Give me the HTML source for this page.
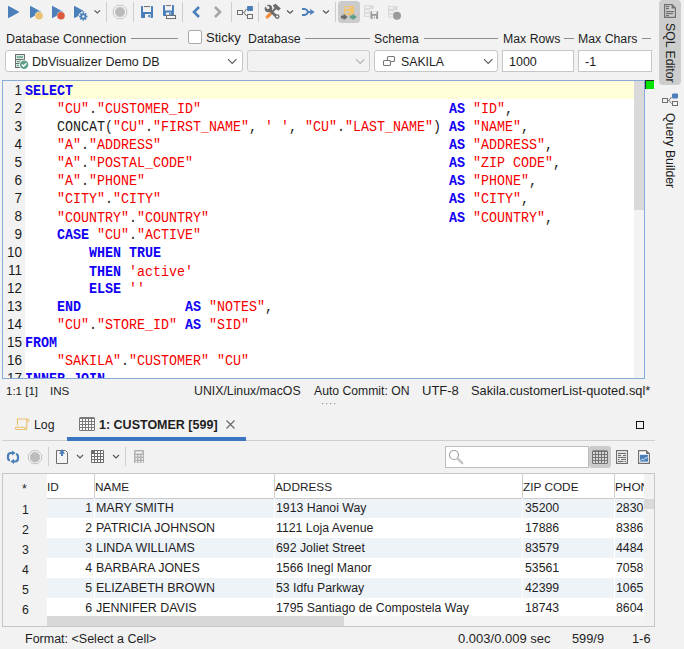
<!DOCTYPE html>
<html><head><meta charset="utf-8">
<style>
*{margin:0;padding:0;box-sizing:border-box}
html,body{width:684px;height:649px;overflow:hidden;background:#f2f2f2}
body{position:relative;font-family:"Liberation Sans",sans-serif;font-size:12.3px;color:#1e1e1e}
.a{position:absolute}
.t{position:absolute;white-space:pre;line-height:16px}
.combo{position:absolute;background:#fff;border:1px solid #c6c6c6;border-radius:3px}
.field{position:absolute;background:#fff;border:1px solid #c6c6c6}
.hl{position:absolute;height:1px;background:#8e8e8e}
.sep{position:absolute;width:1px;background:#cdcdcd}
#code{position:absolute;left:25px;top:82px;font-family:"Liberation Mono",monospace;font-size:13.333px;line-height:16.3636px;transform-origin:0 0;transform:scaleY(1.1);white-space:pre;color:#1a1a1a}
#code .k{color:#0f00f5;font-weight:bold}
#code .s{color:#f50000}
#gut{position:absolute;left:3px;top:81px;width:22px;height:297px;background:#f2f2f2}
.ln{position:absolute;left:0;width:19px;text-align:right;font-size:13.5px;line-height:18px;color:#1a1a1a;transform-origin:0 13px;transform:scaleY(1.1)}
.cell{position:absolute;white-space:pre;line-height:17px;font-size:12.3px;color:#1e1e1e}
</style></head><body>

<!-- ===== TOOLBAR ===== -->
<svg class="a" style="left:0;top:0" width="410" height="26" viewBox="0 0 410 26">
  <!-- run -->
  <path d="M8.5 6.4 L18.6 12 L8.5 17.6 Z" fill="#4a7fba" stroke="#4a7fba" stroke-width="1" stroke-linejoin="round"/>
  <!-- run current -->
  <path d="M30.5 6.4 L40.6 12 L30.5 17.6 Z" fill="#4a7fba" stroke="#4a7fba" stroke-width="1" stroke-linejoin="round"/>
  <circle cx="39" cy="15.8" r="4.3" fill="#f2f2f2"/>
  <circle cx="39" cy="15.8" r="3.8" fill="#e8c173"/>
  <!-- run red -->
  <path d="M52.5 6.4 L62.6 12 L52.5 17.6 Z" fill="#4a7fba" stroke="#4a7fba" stroke-width="1" stroke-linejoin="round"/>
  <circle cx="61" cy="15.8" r="4.3" fill="#f2f2f2"/>
  <circle cx="61" cy="15.8" r="3.8" fill="#dd5a3c"/>
  <!-- run gear -->
  <path d="M74.5 6.4 L84.6 12 L74.5 17.6 Z" fill="#4a7fba" stroke="#4a7fba" stroke-width="1" stroke-linejoin="round"/>
  <circle cx="83.3" cy="16.4" r="4.9" fill="#f2f2f2"/>
  <g fill="#4a7fba"><circle cx="83.3" cy="16.4" r="2.9"/>
   <rect x="82.5" y="12.2" width="1.6" height="8.4"/><rect x="79.1" y="15.6" width="8.4" height="1.6"/>
   <rect x="82.5" y="12.2" width="1.6" height="8.4" transform="rotate(45 83.3 16.4)"/><rect x="82.5" y="12.2" width="1.6" height="8.4" transform="rotate(-45 83.3 16.4)"/></g>
  <circle cx="83.3" cy="16.4" r="1.2" fill="#f2f2f2"/>
  <path d="M94.5 10.3 L97.3 13 L100.1 10.3" stroke="#555" stroke-width="1.1" fill="none"/>
  <rect x="106" y="2" width="1" height="20" fill="#cdcdcd"/>
  <!-- stop -->
  <path d="M117.24 5.35 H122.76 L126.65 9.24 V14.76 L122.76 18.65 H117.24 L113.35 14.76 V9.24 Z" fill="none" stroke="#c4c4c4" stroke-width="1"/>
  <path d="M118 7.2 H122 L124.8 10 V14 L122 16.8 H118 L115.2 14 V10 Z" fill="#bababa"/>
  <rect x="133" y="2" width="1" height="20" fill="#cdcdcd"/>
  <!-- save -->
  <rect x="141" y="6" width="12" height="12" rx="0.8" fill="#4a7fba"/>
  <rect x="143" y="6" width="8" height="6" fill="#f2f2f2"/><rect x="144" y="6" width="6" height="1.1" fill="#777"/>
  <rect x="145" y="14" width="5.6" height="4" fill="#f2f2f2"/><rect x="148.2" y="15" width="1.7" height="2.2" fill="#4a7fba"/>
  <!-- save as -->
  <rect x="163" y="5" width="11" height="11" rx="0.8" fill="#4a7fba"/>
  <rect x="165" y="5" width="7" height="5.5" fill="#f2f2f2"/><rect x="166" y="5" width="5" height="1.1" fill="#777"/>
  <rect x="166" y="12.5" width="5" height="3.5" fill="#f2f2f2"/><rect x="169" y="13" width="1.6" height="1.8" fill="#4a7fba"/>
  <rect x="166.5" y="15.5" width="9" height="3" fill="#fff" stroke="#6e6e6e" stroke-width="1.1"/>
  <rect x="182" y="2" width="1" height="20" fill="#cdcdcd"/>
  <!-- back/fwd -->
  <path d="M199 7 L194 12 L199 17" stroke="#4a7fba" stroke-width="2.6" fill="none" stroke-linejoin="miter"/>
  <path d="M215 7 L220 12 L215 17" stroke="#a6a6a6" stroke-width="2.6" fill="none"/>
  <rect x="231" y="2" width="1" height="20" fill="#cdcdcd"/>
  <!-- diagram -->
  <rect x="237.5" y="10.5" width="5" height="4" fill="none" stroke="#707070"/>
  <rect x="247" y="6" width="6" height="5" rx="1" fill="#4a7fba"/>
  <rect x="247.5" y="14.5" width="5" height="4" fill="none" stroke="#707070"/>
  <path d="M242.5 12.5 L244 12.5 L246.5 9 M244 12.5 L246.5 16" stroke="#707070" fill="none"/>
  <rect x="258" y="2" width="1" height="20" fill="#cdcdcd"/>
  <!-- tools -->
  <path d="M275.5 8.5 L268 16" stroke="#6b6b6b" stroke-width="2" fill="none"/>
  <path d="M270.5 13.9 L267.2 17" stroke="#f0903c" stroke-width="3.2" stroke-linecap="round" fill="none"/>
  <path d="M272.8 5.2 L275.6 3.8 L280.8 8.6 L278.4 10.8 L276.5 9.3 L275 9 Z" fill="#6b6b6b"/>
  <path d="M270 10.5 L277 17" stroke="#6b6b6b" stroke-width="2.8" fill="none"/>
  <circle cx="277.2" cy="16.6" r="2.4" fill="#6b6b6b"/><circle cx="277.2" cy="16.6" r="1.1" fill="#f2f2f2"/>
  <circle cx="268.5" cy="8.5" r="3.8" fill="#6b6b6b"/>
  <path d="M268.4 8 L264.2 6.2 L266.4 3.8 Z" fill="#f2f2f2"/><circle cx="267.9" cy="7.6" r="1.5" fill="#f2f2f2"/>
  <path d="M287 10.5 L290 13.3 L293 10.5" stroke="#555" stroke-width="1.2" fill="none"/>
  <!-- blue arrows -->
  <path d="M302 9 H304.8 Q306.5 9 308.3 12 Q306.5 15 304.8 15 H302 M308 12 H311.5" stroke="#4a7fba" stroke-width="2.1" fill="none"/>
  <path d="M309.6 8.6 L314.6 12 L309.6 15.4 L311 12 Z" fill="#4a7fba"/>
  <path d="M323 10.5 L326 13.3 L329 10.5" stroke="#555" stroke-width="1.2" fill="none"/>
  <rect x="335" y="2" width="1" height="20" fill="#cdcdcd"/>
  <!-- selected -->
  <rect x="338" y="1" width="22" height="22" rx="3.5" fill="#cbcbcb"/>
  <path d="M345 6 H353 Q354 6 354 7 V13.5 Q354 14.5 353 14.5 H351 V15.5 H348 V14.5 H345 Q344 14.5 344 13.5 V7 Q344 6 345 6 Z" fill="#f0c46e"/>
  <rect x="345" y="7" width="4.5" height="2" fill="#cfcfcf"/><rect x="345" y="11" width="4.5" height="2" fill="#cfcfcf"/>
  <path d="M341 15.6 H343.6 V13.8 L347.8 17 L343.6 20.2 V18.4 H341 Z" fill="#6a6a6a"/>
  <path d="M349.8 15.6 H352.6 V13.8 L356.9 17 L352.6 20.2 V18.4 H349.8 Z" fill="#5b9e86"/>
  <!-- disabled 1 -->
  <rect x="364" y="5.3" width="9.5" height="4" rx="0.8" fill="#d9d9d9"/><rect x="365.2" y="6.5" width="4.3" height="1.6" fill="#f4f4f4"/>
  <rect x="364" y="9.3" width="6" height="3.8" fill="#d9d9d9"/><rect x="365.2" y="10.399999999999999" width="4.3" height="1.6" fill="#f4f4f4"/>
  <rect x="364" y="13.1" width="6" height="3.8" fill="#d9d9d9"/><rect x="365.2" y="14.2" width="4.3" height="1.6" fill="#f4f4f4"/>
  <rect x="370" y="11" width="8.2" height="8" rx="0.5" fill="#f2f2f2"/>
  <rect x="370.5" y="11.3" width="7.6" height="7.6" fill="#9a9a9a"/><rect x="372" y="11.3" width="4.6" height="2.6" fill="#f2f2f2"/><rect x="372.6" y="15.8" width="3.4" height="3.1" fill="#f2f2f2"/><rect x="374" y="16.5" width="1" height="1.8" fill="#9a9a9a"/>
  <!-- disabled 2 -->
  <rect x="388" y="6" width="9.5" height="4" rx="0.8" fill="#d9d9d9"/><rect x="389.2" y="7.2" width="4.3" height="1.6" fill="#f4f4f4"/>
  <rect x="388" y="10" width="6" height="3.8" fill="#d9d9d9"/><rect x="389.2" y="11.1" width="4.3" height="1.6" fill="#f4f4f4"/>
  <rect x="388" y="13.8" width="6" height="3.8" fill="#d9d9d9"/><rect x="389.2" y="14.9" width="4.3" height="1.6" fill="#f4f4f4"/>
  <circle cx="397" cy="15.8" r="4.6" fill="#f2f2f2"/><circle cx="397" cy="15.8" r="4" fill="#9a9a9a"/>
</svg>

<!-- ===== LABEL ROW ===== -->
<div class="t" style="left:6px;top:31px;font-size:12.5px">Database Connection</div>
<div class="hl" style="left:131px;top:38px;width:47px"></div>
<div class="a" style="left:188px;top:30px;width:14px;height:14px;border:1px solid #aaa;border-radius:2px;background:#fff"></div>
<div class="t" style="left:206px;top:30px;font-size:13px">Sticky</div>
<div class="t" style="left:248px;top:31px;font-size:12.3px">Database</div>
<div class="hl" style="left:305px;top:38px;width:65px"></div>
<div class="t" style="left:374px;top:31px;font-size:12.2px">Schema</div>
<div class="hl" style="left:424px;top:38px;width:74px"></div>
<div class="t" style="left:503px;top:31px;font-size:12.3px">Max Rows</div>
<div class="hl" style="left:564px;top:38px;width:10px"></div>
<div class="t" style="left:578px;top:31px;font-size:12.3px">Max Chars</div>
<div class="hl" style="left:642px;top:38px;width:9px"></div>

<!-- ===== COMBOS ===== -->
<div class="combo" style="left:5px;top:50px;width:238px;height:22px"></div>
<svg class="a" style="left:14px;top:53px" width="16" height="17" viewBox="14 53 16 17">
  <rect x="15" y="54" width="10" height="6" fill="#6e6e6e"/><rect x="16" y="55" width="8" height="4" fill="#dcece4"/><rect x="16.8" y="56.3" width="6.2" height="1.5" fill="#5e9f85"/>
  <rect x="15" y="59" width="6" height="9" fill="#6e6e6e"/><rect x="16" y="60" width="4.5" height="3" fill="#dcece4"/><rect x="16" y="64" width="4.5" height="3" fill="#dcece4"/>
  <rect x="16.8" y="60.9" width="3" height="1.3" fill="#5e9f85"/><rect x="16.8" y="64.9" width="2" height="1.3" fill="#5e9f85"/>
  <circle cx="24.1" cy="64.7" r="4.9" fill="#fff"/><circle cx="24.1" cy="64.7" r="4.2" fill="#5e9f85"/>
  <path d="M21.8 64.6 L23.6 66.3 L26.5 63.2" stroke="#fff" stroke-width="1.4" fill="none"/>
</svg>
<div class="t" style="left:32px;top:54px;font-size:12.5px">DbVisualizer Demo DB</div>
<svg class="a" style="left:227px;top:58px" width="11" height="7"><path d="M1 1.2 L5.2 5.4 L9.4 1.2" stroke="#555" stroke-width="1.1" fill="none"/></svg>

<div class="combo" style="left:247px;top:50px;width:123px;height:22px;background:#f2f2f2;border-color:#cdcdcd"></div>
<svg class="a" style="left:355px;top:58px" width="11" height="7"><path d="M1 1.2 L5.2 5.4 L9.4 1.2" stroke="#b0b0b0" stroke-width="1.1" fill="none"/></svg>

<div class="combo" style="left:374px;top:50px;width:124px;height:22px"></div>
<svg class="a" style="left:382px;top:55px" width="14" height="12" viewBox="382 55 14 12"><rect x="387.5" y="56.5" width="7" height="5" rx="1" fill="none" stroke="#777" stroke-width="1.1"/><rect x="383.5" y="60.5" width="7" height="5" rx="1" fill="#fff" stroke="#777" stroke-width="1.1"/></svg>
<div class="t" style="left:401px;top:54px;font-size:12.3px">SAKILA</div>
<svg class="a" style="left:483px;top:58px" width="11" height="7"><path d="M1 1.2 L5.2 5.4 L9.4 1.2" stroke="#555" stroke-width="1.1" fill="none"/></svg>

<div class="field" style="left:502px;top:50px;width:72px;height:22px"></div>
<div class="t" style="left:509px;top:54px;font-size:12.5px">1000</div>
<div class="field" style="left:578px;top:50px;width:74px;height:22px"></div>
<div class="t" style="left:585px;top:54px;font-size:12.5px">-1</div>

<!-- ===== RIGHT TABS ===== -->
<div class="a" style="left:659px;top:0px;width:22px;height:85px;background:#cdcdcd;border-radius:4px"></div>
<svg class="a" style="left:663px;top:3px" width="14" height="16" viewBox="663 3 14 16"><path d="M664.6 4.6 H672 L675.4 8 V17.4 H664.6 Z" fill="none" stroke="#707070" stroke-width="1.2"/><path d="M671.6 4.6 V8.4 H675.4 Z" fill="#707070"/><g fill="#707070"><rect x="666" y="6" width="3" height="1.2"/><rect x="666" y="8" width="3" height="1.2"/><rect x="666" y="11" width="8" height="1.2"/><rect x="666" y="13" width="7" height="1.2"/><rect x="666" y="15" width="3" height="1.2"/></g></svg>
<div class="t" style="left:662px;top:23px;transform-origin:0 0;transform:translate(16px,0) rotate(90deg);font-size:12.3px">SQL Editor</div>
<svg class="a" style="left:661px;top:93px" width="18" height="15">
  <rect x="1.5" y="5.5" width="5" height="4" fill="none" stroke="#707070"/>
  <rect x="11" y="0.5" width="6" height="5" rx="1" fill="#4a7fba"/>
  <rect x="11.5" y="8.5" width="5" height="4" fill="none" stroke="#707070"/>
  <path d="M6.5 7.5 L8 7.5 L10.5 4 M8 7.5 L10.5 10.5" stroke="#707070" fill="none"/>
</svg>
<div class="t" style="left:662px;top:113px;transform-origin:0 0;transform:translate(16px,0) rotate(90deg);font-size:12.3px">Query Builder</div>

<!-- ===== EDITOR ===== -->
<div class="a" style="left:2px;top:80px;width:643px;height:299px;background:#fff;border:1px solid #86abd9"></div>
<div id="gut"></div>
<div class="a" style="left:25px;top:81px;width:609px;height:18px;background:#fffed8"></div>
<div class="a" style="left:3px;top:81px;width:631px;height:297px;overflow:hidden">
 <div style="position:absolute;left:0;top:0">
  <div class="ln" style="top:1px">1</div><div class="ln" style="top:19px">2</div><div class="ln" style="top:37px">3</div><div class="ln" style="top:55px">4</div>
  <div class="ln" style="top:73px">5</div><div class="ln" style="top:91px">6</div><div class="ln" style="top:109px">7</div><div class="ln" style="top:127px">8</div>
  <div class="ln" style="top:145px">9</div><div class="ln" style="top:163px">10</div><div class="ln" style="top:181px">11</div><div class="ln" style="top:199px">12</div>
  <div class="ln" style="top:217px">13</div><div class="ln" style="top:235px">14</div><div class="ln" style="top:253px">15</div><div class="ln" style="top:271px">16</div>
  <div class="ln" style="top:289px">17</div>
 </div>
 <div id="code" style="left:22px;top:2px"><span class="k">SELECT</span>
    <span class="s">"CU"</span>.<span class="s">"CUSTOMER_ID"</span>                               <span class="k">AS</span> <span class="s">"ID"</span>,
    CONCAT(<span class="s">"CU"</span>.<span class="s">"FIRST_NAME"</span>, <span class="s">' '</span>, <span class="s">"CU"</span>.<span class="s">"LAST_NAME"</span>) <span class="k">AS</span> <span class="s">"NAME"</span>,
    <span class="s">"A"</span>.<span class="s">"ADDRESS"</span>                                    <span class="k">AS</span> <span class="s">"ADDRESS"</span>,
    <span class="s">"A"</span>.<span class="s">"POSTAL_CODE"</span>                                <span class="k">AS</span> <span class="s">"ZIP CODE"</span>,
    <span class="s">"A"</span>.<span class="s">"PHONE"</span>                                      <span class="k">AS</span> <span class="s">"PHONE"</span>,
    <span class="s">"CITY"</span>.<span class="s">"CITY"</span>                                    <span class="k">AS</span> <span class="s">"CITY"</span>,
    <span class="s">"COUNTRY"</span>.<span class="s">"COUNTRY"</span>                              <span class="k">AS</span> <span class="s">"COUNTRY"</span>,
    <span class="k">CASE</span> <span class="s">"CU"</span>.<span class="s">"ACTIVE"</span>
        <span class="k">WHEN</span> <span class="k">TRUE</span>
        <span class="k">THEN</span> <span class="s">'active'</span>
        <span class="k">ELSE</span> <span class="s">''</span>
    <span class="k">END</span>             <span class="k">AS</span> <span class="s">"NOTES"</span>,
    <span class="s">"CU"</span>.<span class="s">"STORE_ID"</span> <span class="k">AS</span> <span class="s">"SID"</span>
<span class="k">FROM</span>
    <span class="s">"SAKILA"</span>.<span class="s">"CUSTOMER"</span> <span class="s">"CU"</span>
<span class="k">INNER JOIN</span></div>
</div>
<!-- scrollbar -->
<div class="a" style="left:634px;top:81px;width:10px;height:297px;background:#f3f3f3"></div>
<div class="a" style="left:634px;top:81px;width:10px;height:129px;background:#d9d9d9"></div>
<div class="a" style="left:645px;top:80px;width:9px;height:9px;background:#00e400;border-left:1px solid #2a2a2a;border-top:1px solid #2a2a2a"></div>

<!-- ===== STATUS ===== -->
<div class="t" style="left:6px;top:383px;font-size:11.5px">1:1 [1]</div>
<div class="t" style="left:50px;top:383px;font-size:11.6px">INS</div>
<div class="t" style="left:194px;top:383px;font-size:12.3px">UNIX/Linux/macOS</div>
<div class="t" style="left:314px;top:383px;font-size:12.2px">Auto Commit: ON</div>
<div class="t" style="left:422px;top:383px;font-size:13px">UTF-8</div>
<div class="t" style="left:471px;top:383px;font-size:12.8px">Sakila.customerList-quoted.sql*</div>
<svg class="a" style="left:322px;top:403px" width="15" height="2"><g fill="#9a9a9a"><rect x="0" y="0" width="1.2" height="1.2"/><rect x="4" y="0" width="1.2" height="1.2"/><rect x="8" y="0" width="1.2" height="1.2"/><rect x="12" y="0" width="1.2" height="1.2"/></g></svg>

<!-- ===== RESULT TABS ===== -->
<svg class="a" style="left:14px;top:416px" width="17" height="16" viewBox="14 416 17 16"><g fill="none" stroke="#e8c06a" stroke-width="1.1"><path d="M17.5 425.5 V419 H27.5 Q29 419 29 420.3 Q29 421.5 27.5 421.5 M26.8 419 V428.5 Q26.8 429.5 25.5 429.5 H16.5 Q15.5 429.5 15.5 428.3 Q15.5 427.2 16.5 427.2 H24.5 Q25.5 427.2 25.5 428.3 Q25.5 429.5 24.5 429.5"/></g></svg>
<div class="t" style="left:34px;top:417px;font-size:12.3px">Log</div>
<svg class="a" style="left:79px;top:417px" width="16" height="14" viewBox="79 417 16 14"><rect x="79" y="417" width="16" height="14" rx="1.5" fill="#7a7a7a"/><g fill="#fff"><rect x="80" y="419" width="2" height="2"/><rect x="83" y="419" width="2" height="2"/><rect x="86" y="419" width="2" height="2"/><rect x="89" y="419" width="2" height="2"/><rect x="92" y="419" width="2" height="2"/><rect x="80" y="422" width="2" height="2"/><rect x="83" y="422" width="2" height="2"/><rect x="86" y="422" width="2" height="2"/><rect x="89" y="422" width="2" height="2"/><rect x="92" y="422" width="2" height="2"/><rect x="80" y="425" width="2" height="2"/><rect x="83" y="425" width="2" height="2"/><rect x="86" y="425" width="2" height="2"/><rect x="89" y="425" width="2" height="2"/><rect x="92" y="425" width="2" height="2"/><rect x="80" y="428" width="2" height="2"/><rect x="83" y="428" width="2" height="2"/><rect x="86" y="428" width="2" height="2"/><rect x="89" y="428" width="2" height="2"/><rect x="92" y="428" width="2" height="2"/></g></svg>
<div class="t" style="left:99px;top:417px;font-size:12.5px;font-weight:bold">1: CUSTOMER [599]</div>
<svg class="a" style="left:225px;top:419px" width="11" height="11"><path d="M1.5 1.5 L9.5 9.5 M9.5 1.5 L1.5 9.5" stroke="#666" stroke-width="1.1"/></svg>
<div class="a" style="left:2px;top:440px;width:653px;height:1px;background:#cfcfcf"></div>
<div class="a" style="left:67px;top:437px;width:179px;height:4px;background:#3b76c3"></div>
<div class="a" style="left:636px;top:421px;width:8px;height:8px;border:1.6px solid #111"></div>

<!-- ===== RESULT TOOLBAR ===== -->
<svg class="a" style="left:0;top:444px" width="160" height="26" viewBox="0 444 160 26">
  <g fill="none" stroke="#4a7fba" stroke-width="2.2"><path d="M12.5 453 H11 Q8 453 8 456 V458 Q8 460 10 460.5"/><path d="M13.5 461.5 H15 Q18 461.5 18 458.5 V456.5 Q18 454.5 16 454"/></g>
  <path d="M12 450.6 L15.6 453 L12 455.6 Z M14 458.8 L10.5 461.4 L14 464 Z" fill="#4a7fba"/>
  <path d="M32.2 450.8 H37.8 L41.6 454.6 V459.9 L37.8 463.6 H32.2 L28.4 459.9 V454.6 Z" fill="none" stroke="#c2c2c2" stroke-width="1"/>
  <path d="M33 452.2 L37 452.2 L39.8 455 L39.8 459.5 L37 462.3 L33 462.3 L30.2 459.5 L30.2 455 Z" fill="#bcbcbc"/>
  <rect x="48" y="447" width="1" height="19" fill="#cdcdcd"/>
  <path d="M56.5 450.5 H65.5 L67.5 452.5 V463.5 H56.5 Z" fill="#f4f4f4" stroke="#6e6e6e"/>
  <path d="M62 449 L65 453.8 L63 453.8 L63 456 L61 456 L61 453.8 L59 453.8 Z" fill="#4a7fba"/>
  <path d="M77 455 L80 458 L83 455" stroke="#555" stroke-width="1.1" fill="none"/>
  <rect x="91" y="450" width="13" height="13" rx="1" fill="#6e6e6e"/>
  <g fill="#fff"><rect x="95" y="451" width="2" height="2"/><rect x="98" y="451" width="2" height="2"/><rect x="101" y="451" width="2" height="2"/><rect x="92" y="454" width="2" height="2"/><rect x="95" y="454" width="2" height="2"/><rect x="98" y="454" width="2" height="2"/><rect x="101" y="454" width="2" height="2"/><rect x="92" y="457" width="2" height="2"/><rect x="95" y="457" width="2" height="2"/><rect x="98" y="457" width="2" height="2"/><rect x="101" y="457" width="2" height="2"/><rect x="92" y="460" width="2" height="2"/><rect x="95" y="460" width="2" height="2"/><rect x="98" y="460" width="2" height="2"/><rect x="101" y="460" width="2" height="2"/></g>
  <path d="M113 455 L116 458 L119 455" stroke="#555" stroke-width="1.1" fill="none"/>
  <rect x="125" y="447" width="1" height="19" fill="#cdcdcd"/>
  <rect x="134" y="450" width="10" height="13" rx="1" fill="#b0b0b0"/>
  <rect x="135.5" y="451.5" width="7" height="2" fill="#f2f2f2"/>
  <g fill="#f2f2f2"><rect x="135.5" y="455" width="1.6" height="1.6"/><rect x="138.5" y="455" width="1.6" height="1.6"/><rect x="141.5" y="455" width="1.6" height="1.6"/><rect x="135.5" y="458" width="1.6" height="1.6"/><rect x="138.5" y="458" width="1.6" height="1.6"/><rect x="141.5" y="458" width="1.6" height="1.6"/><rect x="135.5" y="461" width="1.6" height="1.6"/><rect x="138.5" y="461" width="1.6" height="1.6"/><rect x="141.5" y="461" width="1.6" height="1.6"/></g>
</svg>
<div class="field" style="left:445px;top:446px;width:144px;height:22px;border-color:#bdbdbd"></div>
<svg class="a" style="left:447px;top:448px" width="20" height="18"><circle cx="7" cy="7" r="4.5" fill="none" stroke="#a0a0a0" stroke-width="1.2"/><path d="M10.8 10.8 L15.2 15.2" stroke="#c6c6c6" stroke-width="2.6" stroke-linecap="round"/></svg>
<div class="a" style="left:589px;top:446px;width:22px;height:22px;background:#cbcbcb;border-radius:3px"></div>
<svg class="a" style="left:591px;top:449px" width="18" height="16" viewBox="591 449 18 16"><rect x="592" y="450.2" width="16" height="13.8" rx="1.5" fill="#747474"/><g fill="#d6d6d6"><rect x="593" y="452" width="2" height="2"/><rect x="596" y="452" width="2" height="2"/><rect x="599" y="452" width="2" height="2"/><rect x="602" y="452" width="2" height="2"/><rect x="605" y="452" width="2" height="2"/><rect x="593" y="455" width="2" height="2"/><rect x="596" y="455" width="2" height="2"/><rect x="599" y="455" width="2" height="2"/><rect x="602" y="455" width="2" height="2"/><rect x="605" y="455" width="2" height="2"/><rect x="593" y="458" width="2" height="2"/><rect x="596" y="458" width="2" height="2"/><rect x="599" y="458" width="2" height="2"/><rect x="602" y="458" width="2" height="2"/><rect x="605" y="458" width="2" height="2"/><rect x="593" y="461" width="2" height="2"/><rect x="596" y="461" width="2" height="2"/><rect x="599" y="461" width="2" height="2"/><rect x="602" y="461" width="2" height="2"/><rect x="605" y="461" width="2" height="2"/></g></svg>
<svg class="a" style="left:615px;top:449px" width="15" height="17" viewBox="615 449 15 17"><rect x="616.6" y="450.6" width="10.8" height="12.8" fill="#fff" stroke="#707070" stroke-width="1.2"/><g fill="#707070"><rect x="618" y="452.8" width="8" height="1.2"/><rect x="618" y="454.8" width="3.4" height="1.2"/><rect x="623" y="454.8" width="3" height="1.2"/><rect x="618" y="456.8" width="8" height="1.2"/><rect x="618" y="458.8" width="1.6" height="1.2"/><rect x="621" y="458.8" width="5" height="1.2"/><rect x="618" y="460.8" width="5.5" height="1.2"/><rect x="624.5" y="460.8" width="1.5" height="1.2"/></g></svg>
<svg class="a" style="left:637px;top:449px" width="15" height="17" viewBox="637 449 15 17"><path d="M638.6 450.6 H646.2 L649.4 453.8 V463.4 H638.6 Z" fill="#fff" stroke="#707070" stroke-width="1.2"/><path d="M646 450.6 V454 H649.4 Z" fill="#707070"/><rect x="640" y="454.8" width="8" height="6.8" fill="#4a7fba"/><path d="M640.5 460.8 L642.3 459 L643.5 460 L645.5 457.8 L646.4 458.4 L648 456.4" stroke="#fff" stroke-width="0.8" fill="none"/></svg>

<!-- ===== GRID ===== -->
<div class="a" style="left:2px;top:473px;width:653px;height:154px;background:#f2f2f2;border:1px solid #c6c6c6"></div>
<div class="a" style="left:47px;top:474px;width:597px;height:24px;background:#fff"></div>
<div class="a" style="left:47px;top:498px;width:597px;height:1px;background:#c9c9c9"></div>
<div class="a" style="left:94px;top:474px;width:1px;height:25px;background:#cfcfcf"></div>
<div class="a" style="left:274px;top:474px;width:1px;height:25px;background:#cfcfcf"></div>
<div class="a" style="left:522px;top:474px;width:1px;height:25px;background:#cfcfcf"></div>
<div class="a" style="left:614px;top:474px;width:1px;height:25px;background:#cfcfcf"></div>
<!-- rows -->
<div class="a" style="left:47px;top:499px;width:597px;height:19px;background:#eef3f8"></div>
<div class="a" style="left:47px;top:518px;width:597px;height:20px;background:#fff"></div>
<div class="a" style="left:47px;top:538px;width:597px;height:20px;background:#eef3f8"></div>
<div class="a" style="left:47px;top:558px;width:597px;height:20px;background:#fff"></div>
<div class="a" style="left:47px;top:578px;width:597px;height:20px;background:#eef3f8"></div>
<div class="a" style="left:47px;top:598px;width:597px;height:18px;background:#fff"></div>
<div class="a" style="left:94px;top:498px;width:1px;height:118px;background:#fff"></div>
<div class="a" style="left:274px;top:498px;width:1px;height:118px;background:#fff"></div>
<div class="a" style="left:522px;top:498px;width:1px;height:118px;background:#fff"></div>
<div class="a" style="left:614px;top:498px;width:1px;height:118px;background:#fff"></div>
<!-- h scrollbar -->
<div class="a" style="left:47px;top:616px;width:597px;height:10px;background:#f4f4f4"></div>
<div class="a" style="left:47px;top:616px;width:297px;height:10px;background:#d8d8d8"></div>
<!-- v scrollbar -->
<div class="a" style="left:644px;top:498px;width:10px;height:128px;background:#f2f2f2"></div>
<div class="a" style="left:644px;top:499px;width:10px;height:10px;background:#d9d9d9"></div>

<div class="cell" style="left:22px;top:481px">*</div>
<div class="cell" style="left:47px;top:479px;font-size:11.8px">ID</div>
<div class="cell" style="left:95px;top:479px;font-size:11.8px">NAME</div>
<div class="cell" style="left:275px;top:479px;font-size:11.8px">ADDRESS</div>
<div class="cell" style="left:523px;top:479px;font-size:11.8px">ZIP CODE</div>
<div class="cell" style="left:615px;top:479px;width:29px;overflow:hidden;font-size:11.8px">PHONE</div>

<div class="cell" style="left:22px;top:502px">1</div><div class="cell" style="left:22px;top:522px">2</div><div class="cell" style="left:22px;top:542px">3</div>
<div class="cell" style="left:22px;top:562px">4</div><div class="cell" style="left:22px;top:582px">5</div><div class="cell" style="left:22px;top:602px">6</div>

<div class="cell" style="left:47px;top:500px;width:45px;text-align:right">1</div>
<div class="cell" style="left:47px;top:520px;width:45px;text-align:right">2</div>
<div class="cell" style="left:47px;top:540px;width:45px;text-align:right">3</div>
<div class="cell" style="left:47px;top:560px;width:45px;text-align:right">4</div>
<div class="cell" style="left:47px;top:580px;width:45px;text-align:right">5</div>
<div class="cell" style="left:47px;top:600px;width:45px;text-align:right">6</div>

<div class="cell" style="left:96px;top:500px;font-size:12.45px">MARY SMITH</div>
<div class="cell" style="left:96px;top:520px;font-size:12.45px">PATRICIA JOHNSON</div>
<div class="cell" style="left:96px;top:540px;font-size:12.45px">LINDA WILLIAMS</div>
<div class="cell" style="left:96px;top:560px;font-size:12.45px">BARBARA JONES</div>
<div class="cell" style="left:96px;top:580px;font-size:12.45px">ELIZABETH BROWN</div>
<div class="cell" style="left:96px;top:600px;font-size:12.45px">JENNIFER DAVIS</div>

<div class="cell" style="left:276px;top:500px">1913 Hanoi Way</div>
<div class="cell" style="left:276px;top:520px">1121 Loja Avenue</div>
<div class="cell" style="left:276px;top:540px">692 Joliet Street</div>
<div class="cell" style="left:276px;top:560px">1566 Inegl Manor</div>
<div class="cell" style="left:276px;top:580px">53 Idfu Parkway</div>
<div class="cell" style="left:276px;top:600px">1795 Santiago de Compostela Way</div>

<div class="cell" style="left:525px;top:500px">35200</div>
<div class="cell" style="left:525px;top:520px">17886</div>
<div class="cell" style="left:525px;top:540px">83579</div>
<div class="cell" style="left:525px;top:560px">53561</div>
<div class="cell" style="left:525px;top:580px">42399</div>
<div class="cell" style="left:525px;top:600px">18743</div>

<div class="a" style="left:616px;top:498px;width:28px;height:118px;overflow:hidden">
<div class="cell" style="left:0;top:2px">2830</div>
<div class="cell" style="left:0;top:22px">8386</div>
<div class="cell" style="left:0;top:42px">4484</div>
<div class="cell" style="left:0;top:62px">7058</div>
<div class="cell" style="left:0;top:82px">1065</div>
<div class="cell" style="left:0;top:102px">8604</div>
</div>

<!-- ===== BOTTOM STATUS ===== -->
<div class="t" style="left:25px;top:631px;font-size:12.5px">Format: &lt;Select a Cell&gt;</div>
<div class="t" style="left:458px;top:631px;font-size:13px">0.003/0.009 sec</div>
<div class="t" style="left:572px;top:631px;font-size:12.8px">599/9</div>
<div class="t" style="left:632px;top:631px;font-size:12.8px">1-6</div>

</body></html>
